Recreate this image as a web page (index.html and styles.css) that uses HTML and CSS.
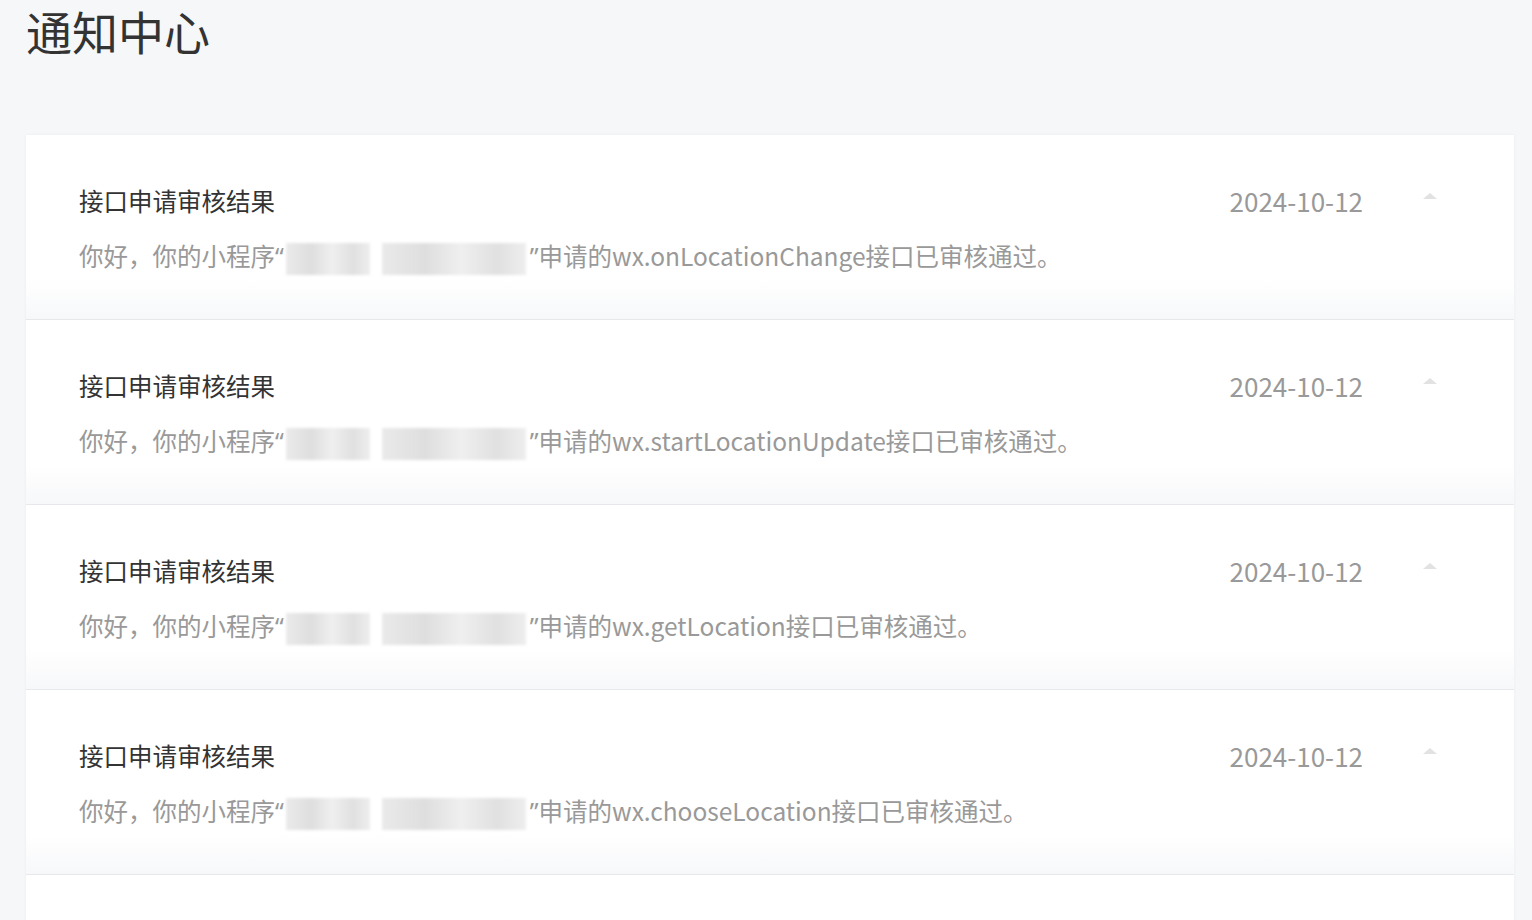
FILE: index.html
```html
<!DOCTYPE html>
<html lang="zh-CN">
<head>
    <meta charset="UTF-8">
    <meta name="viewport" content="width=device-width, initial-scale=1.0">
    <title>通知中心</title>
    <link rel="stylesheet" href="styles.css">
</head>
<body>
    <h1 class="page-title">通知中心</h1>

    <div class="notice-list">
        <div class="notice">
            <div class="notice-title">接口申请审核结果</div>
            <div class="notice-date">2024-10-12</div>
            <div class="notice-caret"></div>
            <div class="notice-text">你好，你的小程序<span class="quote">“</span><span class="mask"><i class="mask-a"></i><i class="mask-b"></i></span><span class="quote">”</span>申请的wx.onLocationChange接口已审核通过。</div>
        </div>
        <div class="notice">
            <div class="notice-title">接口申请审核结果</div>
            <div class="notice-date">2024-10-12</div>
            <div class="notice-caret"></div>
            <div class="notice-text">你好，你的小程序<span class="quote">“</span><span class="mask"><i class="mask-a"></i><i class="mask-b"></i></span><span class="quote">”</span>申请的wx.startLocationUpdate接口已审核通过。</div>
        </div>
        <div class="notice">
            <div class="notice-title">接口申请审核结果</div>
            <div class="notice-date">2024-10-12</div>
            <div class="notice-caret"></div>
            <div class="notice-text">你好，你的小程序<span class="quote">“</span><span class="mask"><i class="mask-a"></i><i class="mask-b"></i></span><span class="quote">”</span>申请的wx.getLocation接口已审核通过。</div>
        </div>
        <div class="notice">
            <div class="notice-title">接口申请审核结果</div>
            <div class="notice-date">2024-10-12</div>
            <div class="notice-caret"></div>
            <div class="notice-text">你好，你的小程序<span class="quote">“</span><span class="mask"><i class="mask-a"></i><i class="mask-b"></i></span><span class="quote">”</span>申请的wx.chooseLocation接口已审核通过。</div>
        </div>
        <!-- 下一条在可视区域外 -->
        <div class="notice notice-empty"></div>
    </div>
</body>
</html>
```

FILE: styles.css
```css
body {
    margin: 0;
    padding: 0 18px 0 26px;
    background-color: #f6f7f9;
    font-family: "Noto Sans CJK SC", "Noto Sans", sans-serif;
    color: #333;
}
.page-title {
    margin: 0;
    padding-top: 2px;
    height: 133px;
    font-size: 46px;
    font-weight: normal;
    line-height: 56px;
    color: #333;
}
.notice-list {
    box-shadow: 0 0 3px rgba(0, 0, 0, 0.05);
}
.notice {
    display: grid;
    grid-template-columns: 1fr auto auto;
    align-items: center;
    align-content: start;
    row-gap: 21px;
    height: 185px;
    box-sizing: border-box;
    padding: 49px 77px 0 53px;
    background: linear-gradient(#fff calc(100% - 40px), #f7f8fa);
    border-bottom: 1px solid #e6e8eb;
}
.notice-empty {
    height: 60px;
    background: #fff;
    border-bottom: none;
}
.notice-title {
    font-size: 24.5px;
    line-height: 34px;
    color: #333;
}
.notice-date {
    font-size: 26px;
    line-height: 34px;
    color: #999;
}
.notice-caret {
    width: 0;
    height: 0;
    margin-left: 60px;
    margin-bottom: 10px;
    border-left: 7px solid transparent;
    border-right: 7px solid transparent;
    border-bottom: 6px solid #e2e2e2;
}
.notice-text {
    grid-column: 1 / 4;
    font-size: 24.5px;
    line-height: 34px;
    color: #999;
    white-space: nowrap;
}
.quote {
    font-family: "Noto Sans", sans-serif;
}
.mask {
    display: inline-flex;
    gap: 12px;
    width: 242px;
    height: 32px;
    padding: 0 2px 0 2px;
    vertical-align: middle;
}
.mask i {
    display: block;
    height: 100%;
    background: linear-gradient(90deg, #eaeaea, #dedede 30%, #efefef 55%, #e0e0e0 80%, #eeeeee);
    filter: blur(1.5px);
}
.mask-a {
    width: 84px;
}
.mask-b {
    width: 144px;
}
```
